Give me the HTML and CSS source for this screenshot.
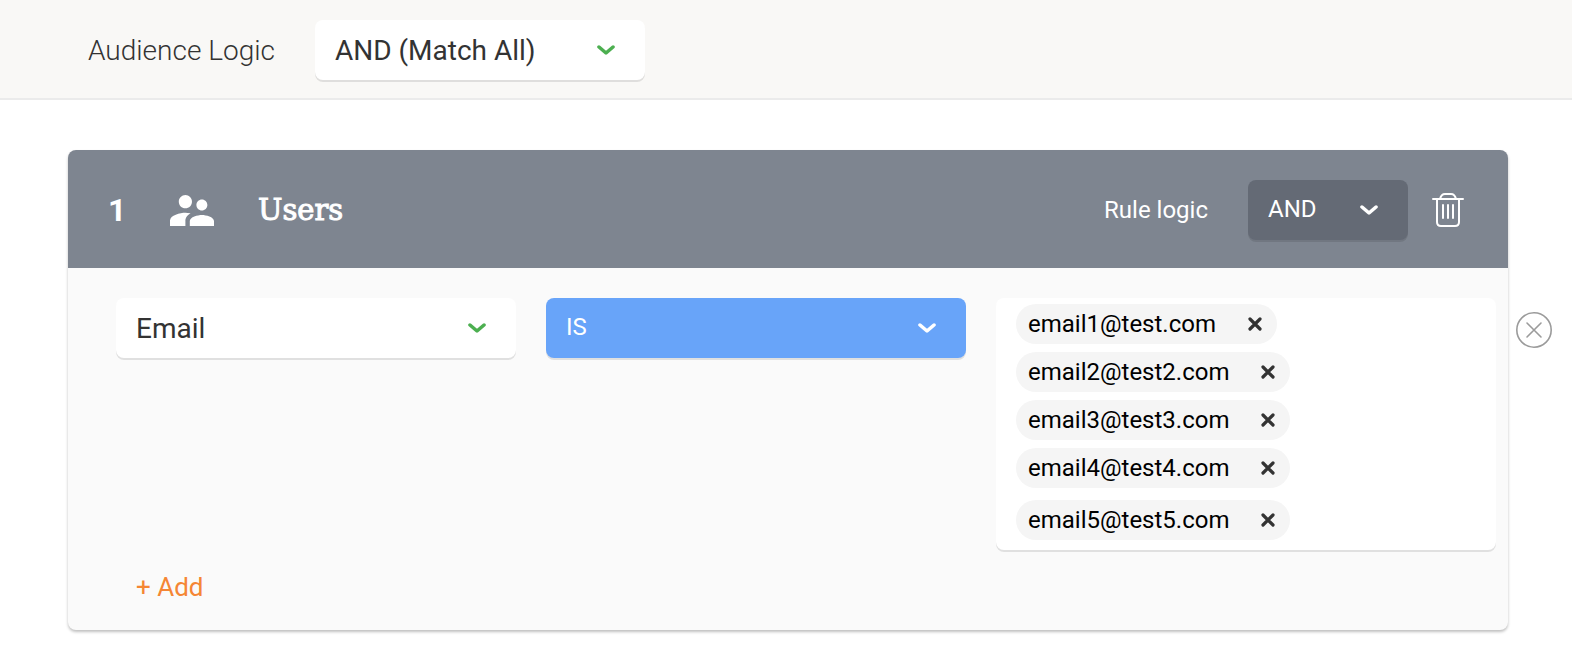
FILE: index.html
```html
<!DOCTYPE html>
<html lang="en">
<head>
    <meta charset="UTF-8">
    <meta name="viewport" content="width=device-width, initial-scale=1.0">
    <title>Audience Rules</title>
    <link rel="stylesheet" href="styles.css">
</head>
<body>
    <div class="top-bar">
        <label for="audience-logic">Audience Logic</label>
        <div class="select-box audience-select">
            <select id="audience-logic">
                <option>AND (Match All)</option>
                <option>OR (Match Any)</option>
            </select>
            <svg class="chevron" viewBox="0 0 18 11"><path d="M2 2l7 6 7-6"/></svg>
        </div>
    </div>

    <main class="content">
        <section class="rule-card">
            <div class="rule-header">
                <span class="rule-number">1</span>
                <svg class="users-icon" viewBox="2 5 20 14"><path d="M16.5 12c1.38 0 2.49-1.12 2.49-2.5S17.88 7 16.5 7 14 8.12 14 9.5s1.12 2.5 2.5 2.5zM9 11c1.66 0 2.99-1.34 2.99-3S10.66 5 9 5 6 6.34 6 8s1.34 3 3 3zm7.5 3c-1.83 0-5.5.92-5.5 2.75V19h11v-2.25c0-1.83-3.67-2.75-5.5-2.75zM9 13c-2.33 0-7 1.17-7 3.5V19h7v-2.25c0-.85.33-2.34 2.37-3.47C10.5 13.1 9.66 13 9 13z"/></svg>
                <h2>Users</h2>
                <label for="rule-logic">Rule logic</label>
                <div class="select-box dark-select">
                    <select id="rule-logic">
                        <option>AND</option>
                        <option>OR</option>
                    </select>
                    <svg class="chevron" viewBox="0 0 18 11"><path d="M2 2l7 6 7-6"/></svg>
                </div>
                <button type="button" class="icon-button" aria-label="Delete rule">
                    <svg class="trash-icon" viewBox="0 0 32 34"><path d="M1 6h30M8 6c1-4 3-5 5-5h6c2 0 4 1 5 5M5 6v23c0 2.500 1.500 4 4 4h14c2.500 0 4-1.500 4-4V6M11 12v13M16 12v13M21 12v13"/></svg>
                </button>
            </div>

            <div class="rule-body">
                <div class="rule-row">
                    <div class="rule-fields">
                        <div class="select-box">
                            <select aria-label="Field">
                                <option>Email</option>
                                <option>Name</option>
                            </select>
                            <svg class="chevron" viewBox="0 0 18 11"><path d="M2 2l7 6 7-6"/></svg>
                        </div>
                        <div class="select-box blue-select">
                            <select aria-label="Condition">
                                <option>IS</option>
                                <option>IS NOT</option>
                            </select>
                            <svg class="chevron" viewBox="0 0 18 11"><path d="M2 2l7 6 7-6"/></svg>
                        </div>
                        <div class="tag-box">
                            <div class="tag">email1@test.com
                                <button type="button" aria-label="Remove email1@test.com"><svg viewBox="0 0 14 14"><path d="M2 2l10 10M12 2L2 12"/></svg></button>
                            </div>
                            <div class="tag">email2@test2.com
                                <button type="button" aria-label="Remove email2@test2.com"><svg viewBox="0 0 14 14"><path d="M2 2l10 10M12 2L2 12"/></svg></button>
                            </div>
                            <div class="tag">email3@test3.com
                                <button type="button" aria-label="Remove email3@test3.com"><svg viewBox="0 0 14 14"><path d="M2 2l10 10M12 2L2 12"/></svg></button>
                            </div>
                            <div class="tag">email4@test4.com
                                <button type="button" aria-label="Remove email4@test4.com"><svg viewBox="0 0 14 14"><path d="M2 2l10 10M12 2L2 12"/></svg></button>
                            </div>
                            <div class="tag-entry">
                                <div class="tag">email5@test5.com
                                    <button type="button" aria-label="Remove email5@test5.com"><svg viewBox="0 0 14 14"><path d="M2 2l10 10M12 2L2 12"/></svg></button>
                                </div>
                                <input type="text" aria-label="Add value">
                            </div>
                        </div>
                    </div>
                    <button type="button" class="icon-button remove-row" aria-label="Remove condition">
                        <svg class="remove-icon" viewBox="0 0 36 36"><circle cx="18" cy="18" r="17.200"/><path d="M11 11l14 14M25 11L11 25"/></svg>
                    </button>
                </div>
                <button type="button" class="add-button">+ Add</button>
            </div>
        </section>
    </main>
</body>
</html>
```
FILE: styles.css
```css
* {
    box-sizing: border-box;
}

body {
    margin: 0;
    font-family: Roboto, sans-serif;
    font-size: 24px;
    color: #333;
    background: #fff;
}

button {
    font-family: inherit;
    border: none;
    background: none;
    padding: 0;
    cursor: pointer;
}

svg {
    display: block;
}

.top-bar {
    display: flex;
    align-items: center;
    gap: 40px;
    padding: 20px 88px 18px;
    background: #f9f8f6;
    border-bottom: 2px solid #ebebeb;
}

.top-bar label {
    font-size: 28px;
    font-weight: 300;
}

/* Selects */
.select-box {
    position: relative;
    height: 60px;
}

.select-box select {
    appearance: none;
    width: 100%;
    height: 60px;
    padding: 0 60px 0 20px;
    border: none;
    border-radius: 8px;
    background: #fff;
    box-shadow: 0 2px 0 rgba(0, 0, 0, 0.1);
    font-family: inherit;
    font-size: 28px;
    color: #333;
}

.audience-select {
    width: 330px;
}

.chevron {
    position: absolute;
    top: 25px;
    right: 30px;
    width: 18px;
    height: 11px;
    fill: none;
    stroke: #4caf50;
    stroke-width: 3.5;
    stroke-linecap: round;
    stroke-linejoin: round;
    pointer-events: none;
}

.dark-select {
    width: 160px;
}

.dark-select select,
.blue-select select {
    padding-bottom: 2px;
    font-size: 24px;
    color: #fff;
}

.dark-select select {
    background: #646a75;
}

.blue-select select {
    background: #68a4f9;
}

.dark-select .chevron,
.blue-select .chevron {
    stroke: #fff;
}

/* Rule card */
.content {
    padding: 50px 64px 38px 68px;
}

.rule-card {
    border-radius: 8px;
    background: #fafafa;
    box-shadow: 0 2px 3px rgba(0, 0, 0, 0.25);
}

.rule-header {
    display: flex;
    align-items: center;
    padding: 30px 44px 28px 40px;
    border-radius: 8px 8px 0 0;
    background: #7e8590;
    color: #fff;
}

.rule-number {
    width: 62px;
    font-size: 32px;
    font-weight: 700;
}

.users-icon {
    width: 44px;
    height: 31px;
    fill: #fff;
}

.rule-header h2 {
    margin: 0 auto 0 44px;
    font-family: "Roboto Slab", "DejaVu Serif", serif;
    font-size: 29px;
    font-weight: 500;
    -webkit-text-stroke: 1px #fff;
}

.rule-header label {
    margin-right: 40px;
}

.trash-icon {
    width: 32px;
    height: 34px;
    margin-left: 24px;
    fill: none;
    stroke: #fff;
    stroke-width: 2;
    stroke-linecap: round;
}

.rule-body {
    padding: 30px 12px 18px 48px;
}

/* the remove button hangs outside the card */
.rule-row {
    display: flex;
    align-items: flex-start;
    gap: 20px;
    margin-right: -56px;
}

.rule-fields {
    flex: 1;
    display: grid;
    grid-template-columns: minmax(0, 20fr) minmax(0, 21fr) minmax(0, 25fr);
    gap: 30px;
}

.remove-row {
    margin-top: 14px;
}

.remove-icon {
    width: 36px;
    height: 36px;
    fill: none;
    stroke: #9b9b9b;
    stroke-width: 1.6;
    stroke-linecap: round;
}

/* Tags */
.tag-box {
    display: flex;
    flex-direction: column;
    align-items: flex-start;
    gap: 8px;
    padding: 6px 20px 10px;
    border-radius: 8px;
    background: #fff;
    box-shadow: 0 2px 0 rgba(0, 0, 0, 0.1);
}

.tag {
    display: flex;
    align-items: center;
    height: 40px;
    padding: 0 15px 0 12px;
    border-radius: 20px;
    background: #f5f5f5;
    color: #000;
}

.tag svg {
    width: 14px;
    height: 14px;
    margin-left: 32px;
    fill: none;
    stroke: #333;
    stroke-width: 3.2;
    stroke-linecap: round;
}

.tag-entry {
    display: flex;
    width: 100%;
    padding-top: 4px;
}

.tag-entry input {
    flex: 1;
    min-width: 0;
    border: none;
    outline: none;
    background: none;
    font-family: inherit;
    font-size: 24px;
}

.add-button {
    margin-top: 12px;
    padding: 0 20px;
    font-size: 26px;
    line-height: 50px;
    color: #f58634;
}
```
